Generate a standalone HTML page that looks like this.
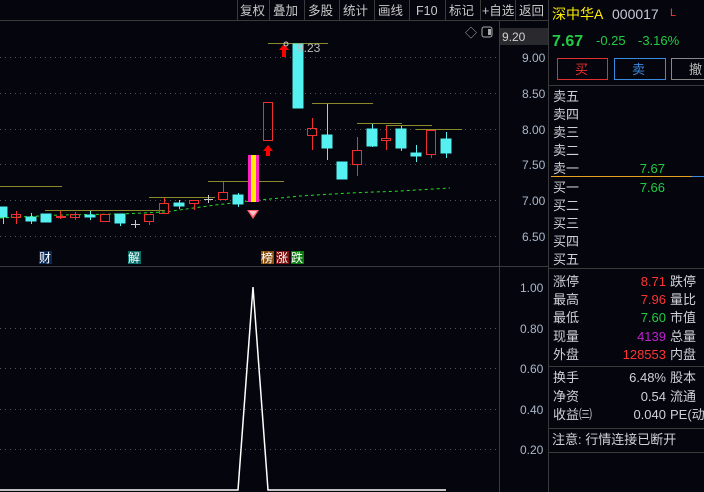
<!DOCTYPE html>
<html><head><meta charset="utf-8"><style>
body{margin:0;background:#05050d;width:704px;height:492px;overflow:hidden;font-family:"Liberation Sans","Noto Sans CJK SC",sans-serif;}
svg{position:absolute;left:0;top:0}
text{font-family:"Liberation Sans","Noto Sans CJK SC",sans-serif;}
</style></head><body>
<svg width="704" height="492" viewBox="0 0 704 492">
<!-- toolbar -->
<g fill="#c8c8c8" font-size="12.5">
<line x1="0" y1="20.5" x2="548" y2="20.5" stroke="#3a3a3a"/>
<g stroke="#3a3a3a"><line x1="237.5" y1="0" x2="237.5" y2="20"/><line x1="269.5" y1="0" x2="269.5" y2="20"/><line x1="304.5" y1="0" x2="304.5" y2="20"/><line x1="339.5" y1="0" x2="339.5" y2="20"/><line x1="374.5" y1="0" x2="374.5" y2="20"/><line x1="409.5" y1="0" x2="409.5" y2="20"/><line x1="445.5" y1="0" x2="445.5" y2="20"/><line x1="480.5" y1="0" x2="480.5" y2="20"/><line x1="515.5" y1="0" x2="515.5" y2="20"/><line x1="548.5" y1="0" x2="548.5" y2="492"/></g>
<text x="240" y="15">复权</text><text x="273" y="15">叠加</text><text x="308" y="15">多股</text><text x="343" y="15">统计</text><text x="378" y="15">画线</text><text x="416" y="15">F10</text><text x="449" y="15">标记</text><text x="482" y="15">+自选</text><text x="519" y="15">返回</text>
</g>
<!-- axis -->
<line x1="499.5" y1="20" x2="499.5" y2="492" stroke="#3a3a3a"/>
<line x1="0" y1="266.5" x2="548" y2="266.5" stroke="#3a3a3a"/>
<rect x="500" y="28" width="48" height="17" fill="#2a2a2e"/>
<text x="502" y="41" fill="#d0d0d0" font-size="12">9.20</text>
<text x="465" y="37" fill="#aaa" font-size="12">◇</text>
<rect x="482" y="27" width="10" height="10" rx="2" fill="none" stroke="#aaa"/><rect x="488" y="29" width="3" height="6" fill="#aaa"/>
<g fill="#aab8c8" font-size="12">
<text x="522" y="62">9.00</text><text x="522" y="98">8.50</text><text x="522" y="134">8.00</text><text x="522" y="169">7.50</text><text x="522" y="205">7.00</text><text x="522" y="241">6.50</text>
<text x="520" y="292">1.00</text><text x="520" y="333">0.80</text><text x="520" y="373">0.60</text><text x="520" y="414">0.40</text><text x="520" y="454">0.20</text>
</g>
<g stroke="#555" stroke-dasharray="1,4">
<line x1="0" y1="57.5" x2="499" y2="57.5"/><line x1="0" y1="93.5" x2="499" y2="93.5"/><line x1="0" y1="129.5" x2="499" y2="129.5"/><line x1="0" y1="164.5" x2="499" y2="164.5"/><line x1="0" y1="200.5" x2="499" y2="200.5"/><line x1="0" y1="236.5" x2="499" y2="236.5"/>
<line x1="0" y1="328.5" x2="496" y2="328.5"/><line x1="0" y1="368.5" x2="496" y2="368.5"/><line x1="0" y1="409.5" x2="496" y2="409.5"/><line x1="0" y1="449.5" x2="496" y2="449.5"/>
</g>
<!-- olive lines -->
<g stroke="#8a8a2a">
<line x1="0" y1="186.5" x2="62" y2="186.5"/><line x1="45" y1="210.5" x2="165" y2="210.5"/><line x1="149" y1="197.5" x2="215" y2="197.5"/><line x1="208" y1="181.5" x2="284" y2="181.5"/><line x1="268" y1="43.5" x2="328" y2="43.5"/><line x1="312" y1="103.5" x2="373" y2="103.5"/><line x1="357" y1="123.5" x2="402" y2="123.5"/><line x1="386" y1="125.5" x2="432" y2="125.5"/><line x1="416" y1="129.5" x2="462" y2="129.5"/>
</g>
<polyline points="0,218 60,215 120,214 165,212 215,205 260,200 300,196 350,193 400,191 450,188" fill="none" stroke="#22e022" stroke-dasharray="3,3"/>
<!-- cyan candles -->
<g fill="#55f0f0" stroke="#55f0f0">
<rect x="0" y="207" width="7" height="10"/><line x1="3.5" y1="207" x2="3.5" y2="224"/>
<rect x="26" y="217" width="10" height="4"/><line x1="31.5" y1="213" x2="31.5" y2="224"/>
<rect x="41" y="214" width="10" height="8"/>
<rect x="85" y="215" width="10" height="2"/><line x1="90.5" y1="211" x2="90.5" y2="220"/>
<rect x="115" y="214" width="10" height="9"/><line x1="120.5" y1="214" x2="120.5" y2="226"/>
<rect x="174" y="203" width="10" height="3"/><line x1="179.5" y1="200" x2="179.5" y2="209"/>
<rect x="233" y="195" width="10" height="9"/><line x1="238.5" y1="193" x2="238.5" y2="207"/>
<rect x="293" y="44" width="10" height="64"/>
<rect x="322" y="135" width="10" height="13"/><line x1="327.5" y1="104" x2="327.5" y2="160"/>
<rect x="337" y="162" width="10" height="17"/>
<rect x="367" y="129" width="10" height="17"/><line x1="372.5" y1="124" x2="372.5" y2="147"/>
<rect x="396" y="129" width="10" height="19"/><line x1="401.5" y1="126" x2="401.5" y2="151"/>
<rect x="411" y="153" width="10" height="3"/><line x1="416.5" y1="145" x2="416.5" y2="162"/>
<rect x="441" y="139" width="10" height="14"/><line x1="446.5" y1="132" x2="446.5" y2="158"/>
</g>
<!-- red candles -->
<g fill="none" stroke="#f03030">
<rect x="11.5" y="214.5" width="9" height="3"/><line x1="16.5" y1="211" x2="16.5" y2="224"/>
<rect x="56.5" y="216.5" width="9" height="1"/><line x1="60.5" y1="211" x2="60.5" y2="219"/>
<rect x="70.5" y="214.5" width="9" height="3"/><line x1="75.5" y1="212" x2="75.5" y2="220"/>
<rect x="100.5" y="214.5" width="9" height="7"/>
<rect x="144.5" y="214.5" width="9" height="7"/><line x1="149.5" y1="222" x2="149.5" y2="225"/>
<rect x="159.5" y="203.5" width="9" height="10"/><line x1="164.5" y1="198" x2="164.5" y2="203"/>
<rect x="189.5" y="200.5" width="9" height="3"/><line x1="194.5" y1="204" x2="194.5" y2="210"/>
<rect x="218.5" y="192.5" width="9" height="7"/><line x1="223.5" y1="182" x2="223.5" y2="192"/>
<rect x="263.5" y="102.5" width="9" height="38"/>
<rect x="307.5" y="128.5" width="9" height="7"/><line x1="312.5" y1="118" x2="312.5" y2="128"/><line x1="312.5" y1="136" x2="312.5" y2="150"/>
<rect x="352.5" y="150.5" width="9" height="14"/><line x1="357.5" y1="137" x2="357.5" y2="150"/><line x1="357.5" y1="165" x2="357.5" y2="176"/>
<rect x="381.5" y="138.5" width="9" height="2"/><line x1="386.5" y1="126" x2="386.5" y2="138"/><line x1="386.5" y1="141" x2="386.5" y2="150"/>
<rect x="426.5" y="130.5" width="9" height="24"/><line x1="431.5" y1="155" x2="431.5" y2="158"/>
</g>
<g stroke="#ccc"><line x1="131" y1="224.5" x2="140" y2="224.5"/><line x1="135.5" y1="220" x2="135.5" y2="228"/><line x1="204" y1="199.5" x2="213" y2="199.5"/><line x1="208.5" y1="195" x2="208.5" y2="203"/></g>
<!-- special bar -->
<rect x="248" y="155" width="11" height="47" fill="#ff20c0"/><rect x="251" y="155" width="5" height="47" fill="#ffee00"/>
<path d="M247,210 L259,210 L253,219Z" fill="#ff6070"/><path d="M249,211 L257,211 L253,216Z" fill="#ffc0c8"/>
<path d="M268,145 L273,151 L270,151 L270,156 L266,156 L266,151 L263,151Z" fill="#f00"/>
<path d="M284,44 L289,50 L286,50 L286,57 L282,57 L282,50 L279,50Z" fill="#f00"/>
<text x="297" y="52" fill="#bbb" font-size="12">9.23</text>
<circle cx="286" cy="44" r="2" fill="none" stroke="#ccc"/>
<!-- labels -->
<rect x="39" y="251" width="13" height="13" fill="#0a2a55"/><text x="39" y="262" fill="#fff" font-size="12">财</text>
<rect x="128" y="251" width="13" height="13" fill="#08706a"/><text x="128" y="262" fill="#fff" font-size="12">解</text>
<rect x="261" y="251" width="13" height="13" fill="#8a5010"/><text x="261" y="262" fill="#fff" font-size="12">榜</text>
<rect x="276" y="251" width="13" height="13" fill="#7a1010"/><text x="276" y="262" fill="#fff" font-size="12">涨</text>
<rect x="291" y="251" width="13" height="13" fill="#0a7a10"/><text x="291" y="262" fill="#fff" font-size="12">跌</text>
<!-- indicator -->
<polyline points="0,490 238,490 253,287 268,490 446,490" fill="none" stroke="#fff" stroke-width="1.5"/>
<!-- right panel -->
<text x="552" y="19" fill="#ffee00" font-size="14">深中华A</text><text x="612" y="19" fill="#c8c8d8" font-size="14">000017</text><text x="670" y="16" fill="#f33" font-size="11">L</text>
<text x="552" y="46" fill="#22cc44" font-size="16" font-weight="bold">7.67</text><text x="596" y="45" fill="#22cc44" font-size="13">-0.25</text><text x="638" y="45" fill="#22cc44" font-size="13">-3.16%</text>
<rect x="557.5" y="58.5" width="50" height="21" fill="none" stroke="#e03030"/><text x="575" y="74" fill="#f03030" font-size="13">买</text>
<rect x="614.5" y="58.5" width="51" height="21" fill="none" stroke="#3a8ae0"/><text x="632" y="74" fill="#3a8ae0" font-size="13">卖</text>
<rect x="671.5" y="58.5" width="40" height="21" fill="none" stroke="#888"/><text x="689" y="74" fill="#bbb" font-size="13">撤</text>
<g stroke="#3a3a3a"><line x1="549" y1="85.5" x2="704" y2="85.5"/><line x1="549" y1="268.5" x2="704" y2="268.5"/><line x1="549" y1="366.5" x2="704" y2="366.5"/><line x1="549" y1="428.5" x2="704" y2="428.5"/><line x1="549" y1="452.5" x2="704" y2="452.5"/></g>
<line x1="551" y1="176.5" x2="692" y2="176.5" stroke="#e8a020"/><line x1="692" y1="176.5" x2="704" y2="176.5" stroke="#3a8ae0"/>
<g fill="#d0d0d8" font-size="13">
<text x="553" y="101">卖五</text><text x="553" y="119">卖四</text><text x="553" y="137">卖三</text><text x="553" y="155">卖二</text><text x="553" y="173">卖一</text>
<text x="553" y="192">买一</text><text x="553" y="210">买二</text><text x="553" y="228">买三</text><text x="553" y="246">买四</text><text x="553" y="264">买五</text>
<text x="553" y="286">涨停</text><text x="553" y="304">最高</text><text x="553" y="322">最低</text><text x="553" y="341">现量</text><text x="553" y="359">外盘</text>
<text x="670" y="286">跌停</text><text x="670" y="304">量比</text><text x="670" y="322">市值</text><text x="670" y="341">总量</text><text x="670" y="359">内盘</text>
<text x="553" y="382">换手</text><text x="553" y="401">净资</text><text x="553" y="419">收益㈢</text>
<text x="666" y="382" text-anchor="end">6.48%</text><text x="666" y="401" text-anchor="end">0.54</text><text x="666" y="419" text-anchor="end">0.040</text>
<text x="670" y="382">股本</text><text x="670" y="401">流通</text><text x="670" y="419">PE(动</text>
<text x="552" y="444">注意: 行情连接已断开</text>
</g>
<g font-size="13" text-anchor="end">
<text x="665" y="173" fill="#22cc44">7.67</text><text x="665" y="192" fill="#22cc44">7.66</text>
<text x="666" y="286" fill="#f33">8.71</text><text x="666" y="304" fill="#f33">7.96</text><text x="666" y="322" fill="#22cc44">7.60</text><text x="666" y="341" fill="#c020d0">4139</text><text x="666" y="359" fill="#f33">128553</text>
</g>
</svg>
</body></html>
